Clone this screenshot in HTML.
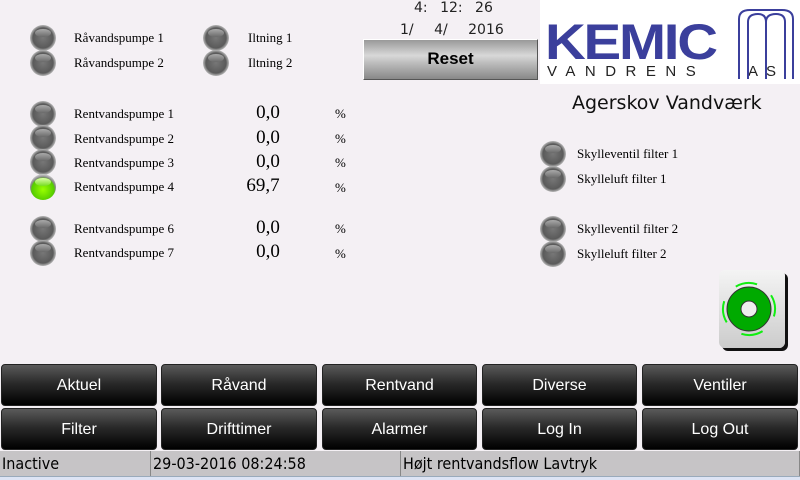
<!DOCTYPE html>
<html><head><meta charset="utf-8"><style>
*{margin:0;padding:0;box-sizing:border-box}
body{width:800px;height:480px;background:#f4f0f4;position:relative;overflow:hidden;font-family:"Liberation Serif",serif}
.a{position:absolute}
.led{position:absolute;width:26px;height:26px;border-radius:50%;background:radial-gradient(circle at 50% 50%,#777 0,#5a5a5a 55%,#888 62%,#ccc 75%,#999 100%);}
.led::after{content:"";position:absolute;left:5px;top:4px;width:16px;height:8px;border-radius:50%;background:linear-gradient(#aaa,#6a6a6a)}
.on{background:radial-gradient(circle at 50% 60%,#9f0 0,#5c0 55%,#888 62%,#ccc 75%,#999 100%)}
.on::after{background:linear-gradient(#dfa,#7d2)}
.l{position:absolute;font-size:13px;color:#000}
.v{position:absolute;font-size:19px;width:60px;text-align:center}
.p{position:absolute;font-size:13px}
.b{position:absolute;height:42px;border-radius:4px;background:linear-gradient(#5a5a5a,#2a2a2a 45%,#000);color:#fff;font-family:"Liberation Sans",sans-serif;font-size:16px;text-align:center;line-height:42px;border:1px solid #222}
.s{position:absolute;top:451px;height:25px;background:#c6c4c6;font-family:"DejaVu Sans Condensed","DejaVu Sans",sans-serif;font-size:16px;line-height:25px;padding-left:2px;border-right:1px solid #888}
</style></head><body>
<div class="led" style="left:30px;top:25px"></div><div class="l" style="left:74px;top:30px">Råvandspumpe 1</div>
<div class="led" style="left:30px;top:50px"></div><div class="l" style="left:74px;top:55px">Råvandspumpe 2</div>
<div class="led" style="left:203px;top:25px"></div><div class="l" style="left:248px;top:30px">Iltning 1</div>
<div class="led" style="left:203px;top:50px"></div><div class="l" style="left:248px;top:55px">Iltning 2</div>

<div class="led" style="left:30px;top:101px"></div><div class="l" style="left:74px;top:106px">Rentvandspumpe 1</div><div class="v" style="left:238px;top:102px">0,0</div><div class="p" style="left:335px;top:106px">%</div>
<div class="led" style="left:30px;top:125px"></div><div class="l" style="left:74px;top:131px">Rentvandspumpe 2</div><div class="v" style="left:238px;top:127px">0,0</div><div class="p" style="left:335px;top:131px">%</div>
<div class="led" style="left:30px;top:149px"></div><div class="l" style="left:74px;top:155px">Rentvandspumpe 3</div><div class="v" style="left:238px;top:151px">0,0</div><div class="p" style="left:335px;top:155px">%</div>
<div class="led on" style="left:30px;top:174px"></div><div class="l" style="left:74px;top:179px">Rentvandspumpe 4</div><div class="v" style="left:233px;top:175px">69,7</div><div class="p" style="left:335px;top:180px">%</div>
<div class="led" style="left:30px;top:216px"></div><div class="l" style="left:74px;top:221px">Rentvandspumpe 6</div><div class="v" style="left:238px;top:217px">0,0</div><div class="p" style="left:335px;top:221px">%</div>
<div class="led" style="left:30px;top:240px"></div><div class="l" style="left:74px;top:245px">Rentvandspumpe 7</div><div class="v" style="left:238px;top:241px">0,0</div><div class="p" style="left:335px;top:246px">%</div>

<div class="a" style="left:414px;top:0px;font-family:'DejaVu Sans',sans-serif;font-size:14px;color:#222;word-spacing:8px">4: 12: 26</div>
<div class="a" style="left:400px;top:22px;font-family:'DejaVu Sans',sans-serif;font-size:14px;color:#222;word-spacing:16px">1/ 4/ 2016</div>
<div class="a" style="left:363px;top:39px;width:175px;height:41px;background:linear-gradient(#999,#d8d8d8 40%,#bbb 60%,#888);border:1px solid #555;border-top-color:#fff;border-left-color:#fff;text-align:center;font-family:'Liberation Sans',sans-serif;font-weight:bold;font-size:17px;line-height:38px">Reset</div>

<div class="a" style="left:540px;top:0;width:260px;height:84px;background:#fff"></div>
<div class="a" style="left:545px;top:13px;font-family:'Liberation Sans',sans-serif;font-weight:900;font-size:50px;line-height:58px;color:#3b3f9c;letter-spacing:-2px;transform:scaleX(1.13);transform-origin:left">KEMIC</div>
<div class="a" style="left:547px;top:64px;font-family:'Liberation Sans',sans-serif;font-size:15px;line-height:16px;color:#222;letter-spacing:9.5px">VANDRENS</div>
<div class="a" style="left:738px;top:63px;width:2px;height:16px;background:#3b3f9c"></div>
<div class="a" style="left:748px;top:64px;font-family:'Liberation Sans',sans-serif;font-size:15px;line-height:16px;color:#222;letter-spacing:8px">AS</div>
<svg class="a" style="left:736px;top:4px" width="60" height="78"><path d="M3 75V15Q3 6 14 6H46Q57 6 57 15V75" fill="none" stroke="#3b3f9c" stroke-width="2"/><path d="M12 75V18Q12 10 22 10Q30 10 30 18V75M30 18Q30 10 40 10Q49 10 49 18V75" fill="none" stroke="#3b3f9c" stroke-width="2"/></svg>
<div class="a" style="left:572px;top:92px;font-family:'DejaVu Sans',sans-serif;font-size:19px;color:#111">Agerskov Vandværk</div>

<div class="led" style="left:540px;top:141px"></div><div class="l" style="left:577px;top:146px">Skylleventil filter 1</div>
<div class="led" style="left:540px;top:166px"></div><div class="l" style="left:577px;top:171px">Skylleluft filter 1</div>
<div class="led" style="left:540px;top:216px"></div><div class="l" style="left:577px;top:221px">Skylleventil filter 2</div>
<div class="led" style="left:540px;top:241px"></div><div class="l" style="left:577px;top:246px">Skylleluft filter 2</div>

<div class="a" style="left:719px;top:270px;width:66px;height:78px;border-radius:6px;background:linear-gradient(#f4f4f4,#ccc);box-shadow:3px 3px 0 #111"></div>
<svg class="a" style="left:719px;top:270px" width="66" height="78"><circle cx="30" cy="39" r="22" fill="#0a0"/><circle cx="30" cy="39" r="22" fill="none" stroke="#333" stroke-width="1"/><circle cx="30" cy="39" r="8" fill="#eee" stroke="#333"/><circle cx="30" cy="39" r="26" fill="none" stroke="#1e1" stroke-width="2" stroke-dasharray="22 19" transform="rotate(-32 30 39)"/></svg>

<div class="b" style="left:1px;top:364px;width:156px">Aktuel</div>
<div class="b" style="left:161px;top:364px;width:156px">Råvand</div>
<div class="b" style="left:322px;top:364px;width:155px">Rentvand</div>
<div class="b" style="left:482px;top:364px;width:155px">Diverse</div>
<div class="b" style="left:642px;top:364px;width:156px">Ventiler</div>
<div class="b" style="left:1px;top:408px;width:156px">Filter</div>
<div class="b" style="left:161px;top:408px;width:156px">Drifttimer</div>
<div class="b" style="left:322px;top:408px;width:155px">Alarmer</div>
<div class="b" style="left:482px;top:408px;width:155px">Log In</div>
<div class="b" style="left:642px;top:408px;width:156px">Log Out</div>

<div class="s" style="left:0;width:151px">Inactive</div>
<div class="s" style="left:151px;width:250px">29-03-2016 08:24:58</div>
<div class="s" style="left:401px;width:399px">Højt rentvandsflow Lavtryk</div>
<div class="a" style="left:0;top:476px;width:800px;height:4px;background:#dde4f4;border-top:1px solid #9ab"></div>
</body></html>
